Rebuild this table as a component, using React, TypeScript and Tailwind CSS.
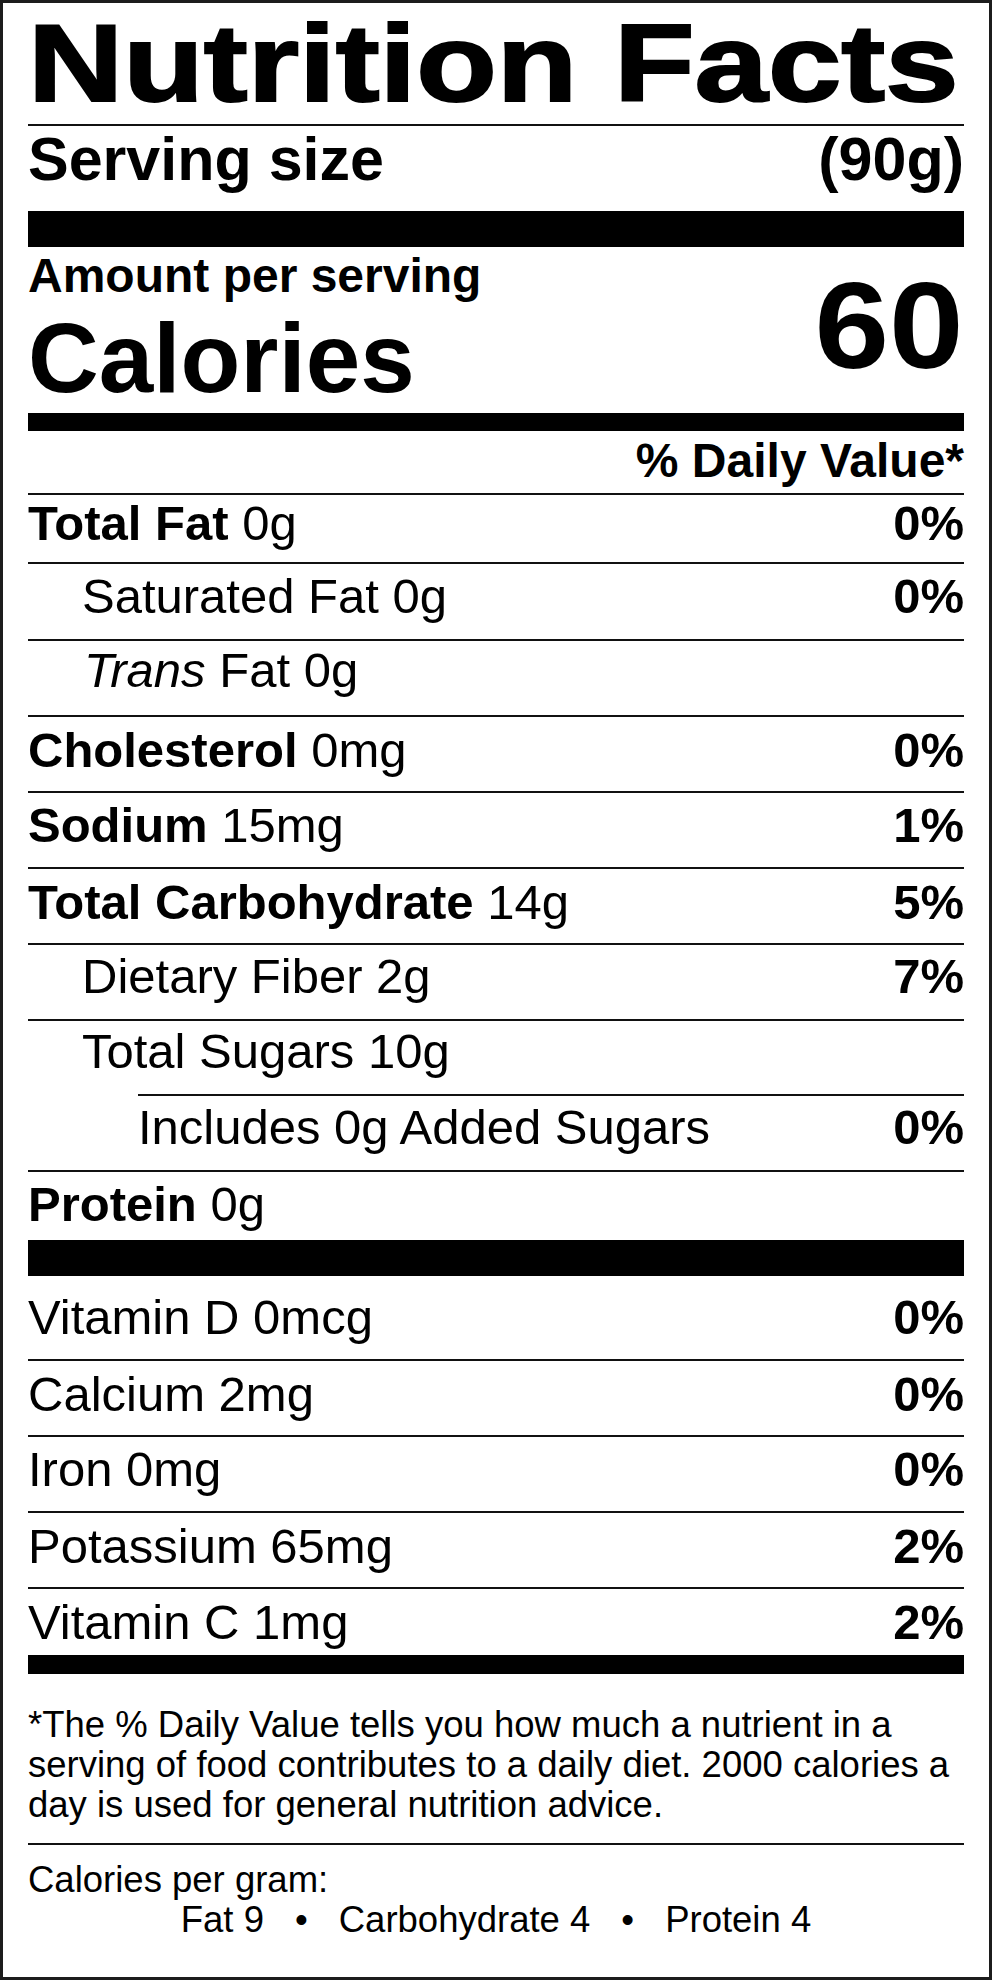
type Row = {
  bold?: string;
  italic?: string;
  text: string;
  dv?: string;
  cls: string;
  line?: string;
};

const nutrients: Row[] = [
  { bold: "Total Fat", text: "0g", dv: "0%", cls: "h-[67px] pt-[4px]" },
  { text: "Saturated Fat 0g", dv: "0%", cls: "h-[75px] pt-[8px] pl-[54px]" },
  { italic: "Trans", text: "Fat 0g", cls: "h-[74px] pt-[5px] pl-[56px]" },
  { bold: "Cholesterol", text: "0mg", dv: "0%", cls: "h-[74px] pt-[9px]" },
  { bold: "Sodium", text: "15mg", dv: "1%", cls: "h-[74px] pt-[8px]" },
  { bold: "Total Carbohydrate", text: "14g", dv: "5%", cls: "h-[74px] pt-[9px]" },
  { text: "Dietary Fiber 2g", dv: "7%", cls: "h-[74px] pt-[7px] pl-[54px]" },
  { text: "Total Sugars 10g", cls: "h-[73px] pt-[6px] pl-[54px]" },
  { text: "Includes 0g Added Sugars", dv: "0%", cls: "h-[74px] pt-[7px] pl-[110px]", line: "ml-[110px]" },
  { bold: "Protein", text: "0g", cls: "h-[68px] pt-[8px]" },
];

const vitamins: Row[] = [
  { text: "Vitamin D 0mcg", dv: "0%", cls: "h-[83px] pt-[17px]" },
  { text: "Calcium 2mg", dv: "0%", cls: "h-[74px] pt-[9px]" },
  { text: "Iron 0mg", dv: "0%", cls: "h-[74px] pt-[8px]" },
  { text: "Potassium 65mg", dv: "2%", cls: "h-[74px] pt-[9px]" },
  { text: "Vitamin C 1mg", dv: "2%", cls: "h-[66px] pt-[9px]" },
];

function NutrientRow({ row }: { row: Row }) {
  return (
    <div className={`flex items-start justify-between text-[49px] leading-none whitespace-pre ${row.cls}`}>
      <span>
        {row.bold && <span className="font-bold">{row.bold} </span>}
        {row.italic && <span className="italic">{row.italic} </span>}
        {row.text}
      </span>
      {row.dv && <span className="font-bold">{row.dv}</span>}
    </div>
  );
}

export default function App() {
  return (
    <div className="w-[992px] h-[1980px] overflow-hidden bg-white border-[3px] border-[#1c1c1c] px-[25px] flex flex-col text-black font-['Liberation_Sans',Arial,sans-serif]">
      {/* title */}
      <div className="h-[121px] pt-[6px]">
        <h1 className="text-[109px] leading-none font-bold whitespace-nowrap origin-left scale-x-[1.21] [-webkit-text-stroke:2px_black]">
          Nutrition Facts
        </h1>
      </div>
      <div className="h-[2px] bg-[#111]" />

      <div className="h-[85px] pt-[3px] flex justify-between text-[61px] leading-none font-bold">
        <span>Serving size</span>
        <span>(90g)</span>
      </div>
      <div className="h-[36px] bg-black" />

      <div className="h-[166px] flex justify-between">
        <div className="pt-[5px]">
          <div className="text-[48px] leading-none font-bold">Amount per serving</div>
          <div className="mt-[9px] text-[98px] leading-none font-bold">Calories</div>
        </div>
        <div className="pt-[18px] text-[122px] leading-none font-bold origin-right scale-x-[1.1]">60</div>
      </div>
      <div className="h-[18px] bg-black" />

      <div className="h-[62px] pt-[6px] text-right text-[48px] leading-none font-bold">% Daily Value*</div>

      {nutrients.map((row) => (
        <div key={row.text}>
          <div className={`h-[2px] bg-[#111] ${row.line ?? ""}`} />
          <NutrientRow row={row} />
        </div>
      ))}
      <div className="h-[36px] bg-black" />

      {vitamins.map((row, i) => (
        <div key={row.text}>
          {i > 0 && <div className="h-[2px] bg-[#111]" />}
          <NutrientRow row={row} />
        </div>
      ))}
      <div className="h-[19px] bg-black" />

      <div className="h-[169px] pt-[31px] text-[36.5px] leading-[40px] whitespace-nowrap">
        *The % Daily Value tells you how much a nutrient in a<br />
        serving of food contributes to a daily diet. 2000 calories a<br />
        day is used for general nutrition advice.
      </div>
      <div className="h-[2px] bg-[#111]" />

      <div className="flex-1 pt-[15px] text-[36.5px] leading-[40px]">
        <div>Calories per gram:</div>
        <div className="flex justify-center whitespace-pre">
          <span>Fat 9</span>
          <span className="mx-[31px]">•</span>
          <span>Carbohydrate 4</span>
          <span className="mx-[31px]">•</span>
          <span>Protein 4</span>
        </div>
      </div>
    </div>
  );
}
